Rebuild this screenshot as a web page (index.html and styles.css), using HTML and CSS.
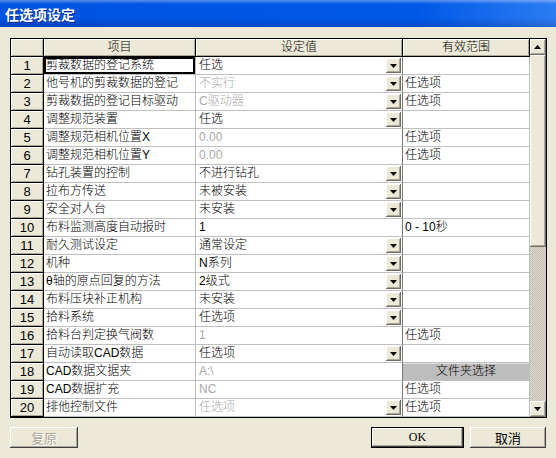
FILE: index.html
```html
<!DOCTYPE html>
<html lang="zh-CN">
<head>
<meta charset="utf-8">
<title>任选项设定</title>
<link rel="stylesheet" href="styles.css">
</head>
<body>
<div class="dialog">
  <div class="titlebar"><span class="title">任选项设定</span></div>
  <div class="body">
    <div class="grid">
      <div class="table">
        <div class="row head"><div class="c rh"></div><div class="c">项目</div><div class="c">设定值</div><div class="c">有效范围</div></div>
        <div class="row"><div class="c rh">1</div><div class="c item sel">剪裁数据的登记系统</div><div class="c val">任选<span class="dd"></span></div><div class="c rng"></div></div>
        <div class="row"><div class="c rh">2</div><div class="c item">他号机的剪裁数据的登记</div><div class="c val dis">不实行<span class="dd"></span></div><div class="c rng">任选项</div></div>
        <div class="row"><div class="c rh">3</div><div class="c item">剪裁数据的登记目标驱动</div><div class="c val dis">C驱动器<span class="dd"></span></div><div class="c rng">任选项</div></div>
        <div class="row"><div class="c rh">4</div><div class="c item">调整规范装置</div><div class="c val">任选<span class="dd"></span></div><div class="c rng"></div></div>
        <div class="row"><div class="c rh">5</div><div class="c item">调整规范相机位置X</div><div class="c val dis">0.00</div><div class="c rng">任选项</div></div>
        <div class="row"><div class="c rh">6</div><div class="c item">调整规范相机位置Y</div><div class="c val dis">0.00</div><div class="c rng">任选项</div></div>
        <div class="row"><div class="c rh">7</div><div class="c item">钻孔装置的控制</div><div class="c val">不进行钻孔<span class="dd"></span></div><div class="c rng"></div></div>
        <div class="row"><div class="c rh">8</div><div class="c item">拉布方传送</div><div class="c val">未被安装<span class="dd"></span></div><div class="c rng"></div></div>
        <div class="row"><div class="c rh">9</div><div class="c item">安全对人台</div><div class="c val">未安装<span class="dd"></span></div><div class="c rng"></div></div>
        <div class="row"><div class="c rh">10</div><div class="c item">布料监测高度自动报时</div><div class="c val">1</div><div class="c rng">0 - 10秒</div></div>
        <div class="row"><div class="c rh">11</div><div class="c item">耐久测试设定</div><div class="c val">通常设定<span class="dd"></span></div><div class="c rng"></div></div>
        <div class="row"><div class="c rh">12</div><div class="c item">机种</div><div class="c val">N系列<span class="dd"></span></div><div class="c rng"></div></div>
        <div class="row"><div class="c rh">13</div><div class="c item">θ轴的原点回复的方法</div><div class="c val">2级式<span class="dd"></span></div><div class="c rng"></div></div>
        <div class="row"><div class="c rh">14</div><div class="c item">布料压块补正机构</div><div class="c val">未安装<span class="dd"></span></div><div class="c rng"></div></div>
        <div class="row"><div class="c rh">15</div><div class="c item">拾料系统</div><div class="c val">任选项<span class="dd"></span></div><div class="c rng"></div></div>
        <div class="row"><div class="c rh">16</div><div class="c item">拾料台判定换气阀数</div><div class="c val dis">1</div><div class="c rng">任选项</div></div>
        <div class="row"><div class="c rh">17</div><div class="c item">自动读取CAD数据</div><div class="c val">任选项<span class="dd"></span></div><div class="c rng"></div></div>
        <div class="row"><div class="c rh">18</div><div class="c item">CAD数据文据夹</div><div class="c val dis">A:\</div><div class="c rng folder">文件夹选择</div></div>
        <div class="row"><div class="c rh">19</div><div class="c item">CAD数据扩充</div><div class="c val dis">NC</div><div class="c rng">任选项</div></div>
        <div class="row"><div class="c rh">20</div><div class="c item">排他控制文件</div><div class="c val dis">任选项<span class="dd"></span></div><div class="c rng">任选项</div></div>
      </div>
      <div class="vscroll">
        <div class="sbtn up"><span class="tri-up"></span></div>
        <div class="thumb"></div>
        <div class="track"></div>
        <div class="sbtn down"><span class="tri-down"></span></div>
      </div>
    </div>
    <div class="buttons">
      <div class="btn restore">复原</div>
      <div class="spacer"></div>
      <div class="btn ok">OK</div>
      <div class="btn cancel">取消</div>
    </div>
  </div>
</div>
</body>
</html>
```

FILE: styles.css
```css
html, body {
  margin: 0;
  padding: 0;
}
body {
  width: 556px;
  height: 458px;
  overflow: hidden;
  background: #ece9d8;
  font: 300 12px "Liberation Sans", "Noto Sans CJK SC", sans-serif;
  color: #000;
}
.titlebar {
  height: 27px;
  box-sizing: border-box;
  padding-left: 5px;
  display: flex;
  align-items: center;
  background:
    linear-gradient(180deg, rgba(255,255,255,0.35) 0, rgba(255,255,255,0) 4px, rgba(0,0,0,0) 65%, rgba(0,0,60,0.18) 100%),
    linear-gradient(90deg, #0053e1 0%, #0058e7 75%, #2c7cf2 100%);
}
.title {
  color: #fff;
  font: bold 14px "Noto Sans CJK SC", sans-serif;
  text-shadow: 1px 1px #0a2a8a;
}
.body {
  padding: 11px 10px 0 10px;
}
.grid {
  display: flex;
  box-sizing: border-box;
  width: 537px;
  height: 380px;
  border: 1px solid #000;
  background: #fff;
}
.table {
  width: 519px;
}
.row {
  display: grid;
  grid-template-columns: 33px 152px 207px 127px;
  height: 18px;
}
.c {
  position: relative;
  box-sizing: border-box;
  border-right: 1px solid #c0c0c0;
  border-bottom: 1px solid #c0c0c0;
  background: #fff;
  line-height: 17px;
  padding-left: 2px;
  white-space: nowrap;
  overflow: hidden;
}
.val {
  border-right-color: #7a7a7a;
  padding-left: 3px;
}
.rng {
  padding-left: 2px;
}
.dis {
  color: #a9a9a9;
}
.sel {
  box-shadow: inset 0 0 0 2px #000;
}
.head .c {
  background: #ece9d8;
  border-right: 1px solid #000;
  border-bottom: 1px solid #000;
  text-align: center;
  padding: 0;
  box-shadow: inset 1px 1px #fff, inset -1px -1px #aca899;
}
.c.rh {
  background: #ece9d8;
  border-right: 1px solid #000;
  border-bottom: 1px solid #000;
  text-align: center;
  padding: 0;
  font-size: 13px;
  box-shadow: inset 1px 1px #fff, inset -1px -1px #aca899;
}
.dd {
  position: absolute;
  right: 1px;
  top: 1px;
  width: 15px;
  height: 15px;
  box-sizing: border-box;
  background: #ece9d8;
  box-shadow: inset -1px -1px #716f64, inset 1px 1px #fff, inset -2px -2px #aca899;
}
.dd::after {
  content: "";
  position: absolute;
  left: 4px;
  top: 6px;
  width: 7px;
  height: 4px;
  background: #000;
  clip-path: polygon(0 0, 100% 0, 50% 100%);
}
.folder {
  background: #bdbdbd;
  text-align: center;
  padding: 0;
  box-shadow: inset 0 1px #e0e0e0;
}
.vscroll {
  width: 16px;
  display: flex;
  flex-direction: column;
  background: #ece9d8;
}
.sbtn {
  position: relative;
  height: 16px;
  flex: none;
  background: #ece9d8;
  box-shadow: inset -1px -1px #716f64, inset 1px 1px #fff, inset -2px -2px #aca899;
}
.tri-up, .tri-down {
  position: absolute;
  left: 4px;
  top: 6px;
  width: 7px;
  height: 4px;
  background: #000;
}
.tri-up {
  clip-path: polygon(50% 0, 100% 100%, 0 100%);
}
.tri-down {
  clip-path: polygon(0 0, 100% 0, 50% 100%);
}
.thumb {
  height: 192px;
  flex: none;
  background: #ece9d8;
  box-shadow: inset -1px -1px #716f64, inset 1px 1px #fff, inset -2px -2px #aca899;
}
.track {
  flex: 1;
  background: repeating-conic-gradient(#c4c0b2 0 25%, #dcd9cc 0 50%) 0 0 / 2px 2px;
}
.buttons {
  display: flex;
  margin-top: 9px;
  height: 21px;
}
.spacer {
  flex: 1;
}
.btn {
  box-sizing: border-box;
  height: 21px;
  display: flex;
  align-items: center;
  justify-content: center;
  background: #ece9d8;
  font: 13px "Noto Sans CJK SC", sans-serif;
  box-shadow: inset -1px -1px #404040, inset 1px 1px #fff, inset -2px -2px #aca899;
}
.restore {
  width: 68px;
  color: #aca899;
  text-shadow: 1px 1px #fff;
}
.ok {
  width: 93px;
  border: 1px solid #000;
  font: 12px "Liberation Serif", serif;
}
.cancel {
  width: 76px;
  margin-left: 6px;
}
```
